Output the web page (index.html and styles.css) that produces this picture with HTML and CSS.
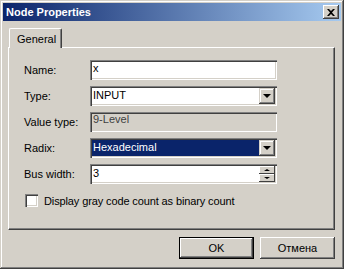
FILE: index.html
```html
<!DOCTYPE html>
<html lang="en">
<head>
    <meta charset="UTF-8">
    <title>Node Properties</title>
    <link rel="stylesheet" href="styles.css">
</head>
<body>
    <div class="window">
        <div class="titlebar">
            <span class="title">Node Properties</span>
            <button class="close-btn">
                <svg width="8" height="7" viewBox="0 0 8 7"><path d="M0 0h2l2 2 2-2h2L5 3.5 8 7H6L4 5 2 7H0l3-3.5z" fill="#000"/></svg>
            </button>
        </div>
        <div class="content">
            <div class="tabs">
                <div class="tab active">General</div>
            </div>
            <div class="panel">
                <div class="row">
                    <label>Name:</label>
                    <div class="field">x</div>
                </div>
                <div class="row">
                    <label>Type:</label>
                    <div class="field combo">
                        <span class="value">INPUT</span>
                        <span class="drop-btn"><i class="arrow"></i></span>
                    </div>
                </div>
                <div class="row">
                    <label>Value type:</label>
                    <div class="field disabled">9-Level</div>
                </div>
                <div class="row">
                    <label>Radix:</label>
                    <div class="field combo">
                        <span class="value selected">Hexadecimal</span>
                        <span class="drop-btn"><i class="arrow"></i></span>
                    </div>
                </div>
                <div class="row">
                    <label>Bus width:</label>
                    <div class="field combo">
                        <span class="value">3</span>
                        <span class="spin">
                            <span class="spin-btn"><i class="arrow up"></i></span>
                            <span class="spin-btn"><i class="arrow small"></i></span>
                        </span>
                    </div>
                </div>
                <div class="check-row">
                    <span class="checkbox"></span>
                    <span>Display gray code count as binary count</span>
                </div>
            </div>
            <div class="buttons">
                <button class="btn default">OK</button>
                <button class="btn">Отмена</button>
            </div>
        </div>
    </div>
</body>
</html>
```

FILE: styles.css
```css
body {
    margin: 0;
    padding: 0;
    background-color: #d4d0c8;
    font-family: "Liberation Sans", Arial, sans-serif;
    font-size: 11px;
    color: #000;
}

.window {
    box-sizing: border-box;
    width: 344px;
    height: 269px;
    padding: 3px;
    background-color: #d4d0c8;
    box-shadow: inset -1px -1px #404040, inset 1px 1px #d4d0c8, inset -2px -2px #808080, inset 2px 2px #fff;
}

.titlebar {
    height: 18px;
    display: flex;
    align-items: center;
    justify-content: space-between;
    padding: 0 2px 0 3px;
    background: linear-gradient(to right, #0a246a, #a6caf0);
}

.title {
    color: #fff;
    font-weight: bold;
    font-size: 11px;
    font-family: "Liberation Sans", Arial, sans-serif;
}

.close-btn {
    width: 16px;
    height: 14px;
    padding: 0;
    border: none;
    background-color: #d4d0c8;
    display: flex;
    align-items: center;
    justify-content: center;
    box-shadow: inset -1px -1px #404040, inset 1px 1px #fff, inset -2px -2px #808080;
}

.content {
    padding: 7px 3px 0 5px;
}

.tabs {
    display: flex;
    padding-left: 1px;
}

.tab {
    height: 20px;
    width: 53px;
    box-sizing: border-box;
    padding-top: 4px;
    padding-left: 7px;
    border-left: 1px solid #fff;
    border-top: 1px solid #fff;
    border-right: 1px solid #404040;
    border-radius: 2px 2px 0 0;
    box-shadow: inset -1px 0 #808080;
    position: relative;
    z-index: 1;
    margin-bottom: -1px;
    background-color: #d4d0c8;
}

.panel {
    box-sizing: border-box;
    width: 327px;
    height: 183px;
    border-left: 1px solid #fff;
    border-top: 1px solid #fff;
    border-right: 1px solid #404040;
    border-bottom: 1px solid #404040;
    box-shadow: inset -1px -1px #808080;
    padding: 12px 0 0 15px;
}

.row {
    display: flex;
    align-items: center;
    height: 20px;
    margin-bottom: 6px;
}

.row label {
    width: 66px;
}

.field {
    box-sizing: border-box;
    width: 187px;
    height: 20px;
    background-color: #fff;
    padding: 2px 0 0 3px;
    box-shadow: inset 1px 1px #808080, inset 2px 2px #404040, inset -1px -1px #fff, inset -2px -2px #d4d0c8;
}

.field.disabled {
    background-color: #d4d0c8;
    color: #404040;
    padding-top: 1px;
}

.combo {
    display: flex;
    padding: 2px;
}

.combo .value {
    flex: 1;
    padding: 1px 0 0 1px;
}

.value.selected {
    background-color: #0a246a;
    color: #fff;
}

.drop-btn {
    width: 16px;
    background-color: #d4d0c8;
    display: flex;
    align-items: center;
    justify-content: center;
    box-shadow: inset -1px -1px #404040, inset 1px 1px #d4d0c8, inset -2px -2px #808080, inset 2px 2px #fff;
}

.arrow {
    width: 0;
    height: 0;
    border-left: 4px solid transparent;
    border-right: 4px solid transparent;
    border-top: 4px solid #000;
}

.arrow.small {
    border-left-width: 3px;
    border-right-width: 3px;
    border-top-width: 2px;
}

.arrow.up {
    border-left: 3px solid transparent;
    border-right: 3px solid transparent;
    border-top: none;
    border-bottom: 2px solid #000;
}

.spin {
    width: 16px;
    display: flex;
    flex-direction: column;
}

.spin-btn {
    flex: 1;
    display: flex;
    align-items: center;
    justify-content: center;
    background-color: #d4d0c8;
    box-shadow: inset -1px -1px #404040, inset 1px 1px #fff;
}

.check-row {
    display: flex;
    align-items: center;
    gap: 6px;
    margin-top: 10px;
    padding-left: 1px;
    letter-spacing: -0.12px;
}

.checkbox {
    width: 13px;
    height: 13px;
    box-sizing: border-box;
    background-color: #fff;
    box-shadow: inset 1px 1px #808080, inset 2px 2px #404040, inset -1px -1px #fff, inset -2px -2px #d4d0c8;
}

.buttons {
    display: flex;
    justify-content: flex-end;
    gap: 6px;
    margin-top: 7px;
    padding-right: 3px;
}

.btn {
    width: 75px;
    height: 22px;
    padding: 0;
    border: none;
    background-color: #d4d0c8;
    font-family: "Liberation Sans", Arial, sans-serif;
    font-size: 11px;
    color: #000;
    box-shadow: inset -1px -1px #404040, inset 1px 1px #fff, inset -2px -2px #808080;
}

.btn.default {
    box-shadow: inset -1px -1px #000, inset 1px 1px #000, inset -2px -2px #404040, inset 2px 2px #fff, inset -3px -3px #808080;
}
```
